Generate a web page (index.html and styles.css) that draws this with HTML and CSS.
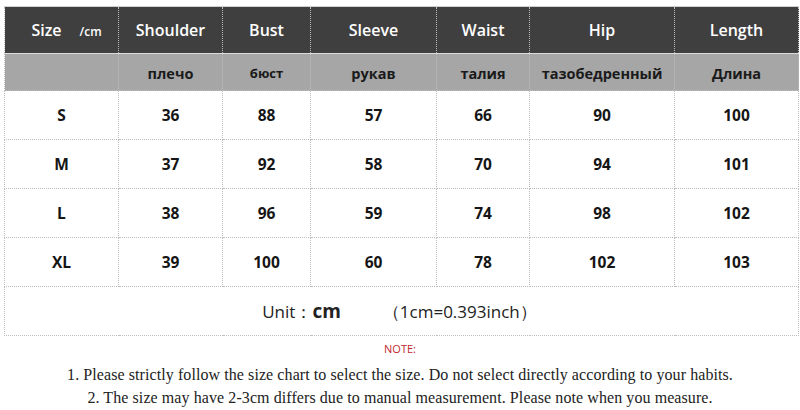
FILE: index.html
```
<!DOCTYPE html>
<html>
<head>
<meta charset="utf-8">
<link rel="stylesheet" href="styles.css">
</head>
<body>
<table class="chart">
  <colgroup>
    <col class="c1"><col class="c2"><col class="c3"><col class="c4"><col class="c5"><col class="c6"><col class="c7">
  </colgroup>
  <tr class="head">
    <th><span class="size">Size</span><span class="unit">/cm</span></th>
    <th>Shoulder</th><th>Bust</th><th>Sleeve</th><th>Waist</th><th>Hip</th><th>Length</th>
  </tr>
  <tr class="sub">
    <td></td><td>плечо</td><td class="small">бюст</td><td>рукав</td><td>талия</td><td>тазобедренный</td><td>Длина</td>
  </tr>
  <tr class="row"><td>S</td><td>36</td><td>88</td><td>57</td><td>66</td><td>90</td><td>100</td></tr>
  <tr class="row"><td>M</td><td>37</td><td>92</td><td>58</td><td>70</td><td>94</td><td>101</td></tr>
  <tr class="row"><td>L</td><td>38</td><td>96</td><td>59</td><td>74</td><td>98</td><td>102</td></tr>
  <tr class="row"><td>XL</td><td>39</td><td>100</td><td>60</td><td>78</td><td>102</td><td>103</td></tr>
  <tr class="unitrow">
    <td colspan="7"><span class="ulabel">Unit：</span><span class="ucm">cm</span><span class="uconv">（1cm=0.393inch）</span></td>
  </tr>
</table>
<div class="notes">
  <p class="note-title">NOTE:</p>
  <p class="note-line">1. Please strictly follow the size chart to select the size. Do not select directly according to your habits.</p>
  <p class="note-line">2. The size may have 2-3cm differs due to manual measurement. Please note when you measure.</p>
</div>
</body>
</html>
```
FILE: styles.css
```
html, body {
  margin: 0;
  padding: 0;
  background: #fff;
}
body {
  width: 800px;
  height: 410px;
  overflow: hidden;
  font-family: "Open Sans", "Noto Sans", sans-serif;
}
.chart {
  border-collapse: collapse;
  table-layout: fixed;
  width: 794px;
  margin: 6px 0 0 4px;
}
.c1 { width: 114px; }
.c2 { width: 104px; }
.c3 { width: 88px; }
.c4 { width: 126px; }
.c5 { width: 93px; }
.c6 { width: 145px; }
.c7 { width: 124px; }
.chart th, .chart td {
  border: 1px dotted #bdbdbd;
  text-align: center;
  padding: 0;
}
.head th {
  background: #3f3f3f;
  color: #fff;
  height: 46px;
  font-weight: 600;
  font-size: 16px;
  border-bottom: 1px solid #dcdcdc;
  border-top: 1px solid #d0d0d0;
}
.head .size { margin-left: 10px; }
.head .unit {
  font-size: 12px;
  margin-left: 18px;
}
.sub td {
  background: #a6a6a6;
  color: #1a1a1a;
  height: 34px;
  font-weight: 700;
  font-size: 14.5px;
  padding-top: 2px;
}
.sub td.small { font-size: 13px; }
.row td {
  height: 48px;
  font-weight: 700;
  font-size: 15.5px;
  color: #151515;
}
.unitrow td {
  height: 48px;
  color: #222;
  font-size: 17px;
}
.ucm {
  font-weight: 700;
  font-size: 19px;
}
.uconv {
  margin-left: 42px;
  margin-right: 4px;
}
.notes {
  text-align: center;
}
.note-title {
  margin: 6px 0 0;
  color: #c0272d;
  font-size: 11px;
  line-height: 14px;
}
.note-line {
  margin: 0;
  font-family: "Liberation Serif", "DejaVu Serif", serif;
  font-size: 16px;
  letter-spacing: 0.08px;
  line-height: 23px;
  color: #222;
}
.note-title + .note-line { margin-top: 7px; }
```
